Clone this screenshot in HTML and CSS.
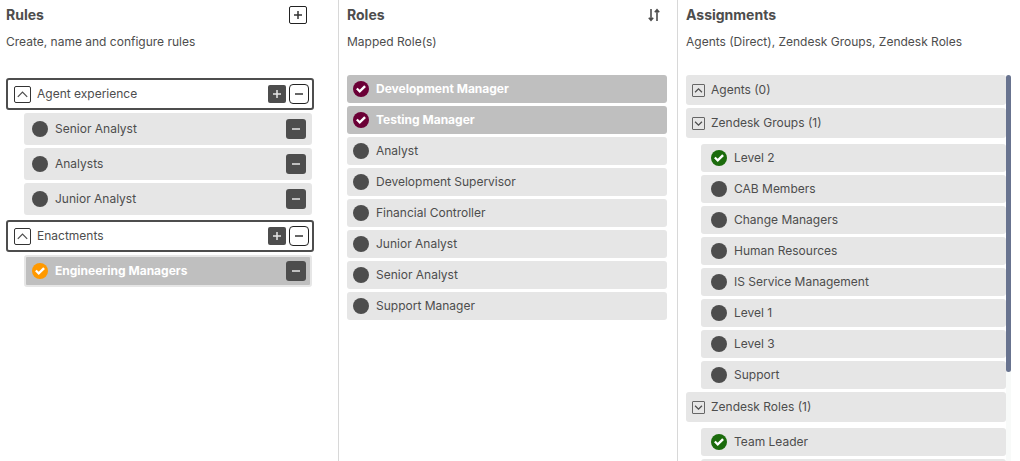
FILE: index.html
```html
<!DOCTYPE html>
<html lang="en">
<head>
    <meta charset="UTF-8">
    <meta name="viewport" content="width=device-width, initial-scale=1.0">
    <title>Rules</title>
    <link rel="stylesheet" href="styles.css">
</head>
<body>
    <svg width="0" height="0" class="sprite" aria-hidden="true">
        <symbol id="plus" viewBox="0 0 16 16"><path d="M8 4v8M4 8h8"/></symbol>
        <symbol id="minus" viewBox="0 0 16 16"><path d="M4 8h8"/></symbol>
        <symbol id="up" viewBox="0 0 16 16"><path d="M3 10.5l5-5 5 5"/></symbol>
        <symbol id="down" viewBox="0 0 16 16"><path d="M3 5.5l5 5 5-5"/></symbol>
    </svg>

    <main class="columns">
        <section class="column rules">
            <header class="column-header">
                <h2>Rules</h2>
                <button class="btn outline" aria-label="Add group"><svg><use href="#plus"/></svg></button>
            </header>
            <p class="description">Create, name and configure rules</p>

            <div class="rule-list">
                <div class="rule-group">
                    <button class="toggle" aria-label="Collapse"><svg><use href="#up"/></svg></button>
                    <span class="name">Agent experience</span>
                    <button class="btn" aria-label="Add rule"><svg><use href="#plus"/></svg></button>
                    <button class="btn outline large" aria-label="Remove group"><svg><use href="#minus"/></svg></button>
                </div>
                <div class="rule">
                    <label><input type="checkbox">Senior Analyst</label>
                    <button class="btn large" aria-label="Remove rule"><svg><use href="#minus"/></svg></button>
                </div>
                <div class="rule">
                    <label><input type="checkbox">Analysts</label>
                    <button class="btn large" aria-label="Remove rule"><svg><use href="#minus"/></svg></button>
                </div>
                <div class="rule">
                    <label><input type="checkbox">Junior Analyst</label>
                    <button class="btn large" aria-label="Remove rule"><svg><use href="#minus"/></svg></button>
                </div>

                <div class="rule-group">
                    <button class="toggle" aria-label="Collapse"><svg><use href="#up"/></svg></button>
                    <span class="name">Enactments</span>
                    <button class="btn" aria-label="Add rule"><svg><use href="#plus"/></svg></button>
                    <button class="btn outline large" aria-label="Remove group"><svg><use href="#minus"/></svg></button>
                </div>
                <div class="rule selected">
                    <label><input type="checkbox" checked>Engineering Managers</label>
                    <button class="btn large" aria-label="Remove rule"><svg><use href="#minus"/></svg></button>
                </div>
            </div>
        </section>

        <section class="column roles">
            <header class="column-header">
                <h2>Roles</h2>
                <button class="sort" aria-label="Sort">
                    <svg viewBox="0 0 12 14"><path d="M3 1v11M.8 9.800L3 12.200l2.200-2.400M9 13V2M6.800 4.200L9 1.800l2.200 2.400"/></svg>
                </button>
            </header>
            <p class="description">Mapped Role(s)</p>

            <div class="list">
                <label class="item selected"><input type="checkbox" checked>Development Manager</label>
                <label class="item selected"><input type="checkbox" checked>Testing Manager</label>
                <label class="item"><input type="checkbox">Analyst</label>
                <label class="item"><input type="checkbox">Development Supervisor</label>
                <label class="item"><input type="checkbox">Financial Controller</label>
                <label class="item"><input type="checkbox">Junior Analyst</label>
                <label class="item"><input type="checkbox">Senior Analyst</label>
                <label class="item"><input type="checkbox">Support Manager</label>
            </div>
        </section>

        <section class="column assignments">
            <header class="column-header">
                <h2>Assignments</h2>
            </header>
            <p class="description">Agents (Direct), Zendesk Groups, Zendesk Roles</p>

            <div class="scroller">
                <div class="list">
                    <button class="group"><svg><use href="#up"/></svg>Agents (0)</button>
                    <button class="group"><svg><use href="#down"/></svg>Zendesk Groups (1)</button>
                    <div class="list sublist">
                        <label class="item"><input type="checkbox" checked>Level 2</label>
                        <label class="item"><input type="checkbox">CAB Members</label>
                        <label class="item"><input type="checkbox">Change Managers</label>
                        <label class="item"><input type="checkbox">Human Resources</label>
                        <label class="item"><input type="checkbox">IS Service Management</label>
                        <label class="item"><input type="checkbox">Level 1</label>
                        <label class="item"><input type="checkbox">Level 3</label>
                        <label class="item"><input type="checkbox">Support</label>
                    </div>
                    <button class="group"><svg><use href="#down"/></svg>Zendesk Roles (1)</button>
                    <div class="list sublist">
                        <label class="item"><input type="checkbox" checked>Team Leader</label>
                        <label class="item"><input type="checkbox" aria-label="Role"></label>
                    </div>
                </div>
                <div class="scrollbar"><div class="thumb"></div></div>
            </div>
        </section>
    </main>
</body>
</html>
```
FILE: styles.css
```css
* {
    box-sizing: border-box;
}

body {
    margin: 0;
    padding-right: 3px;
    height: 100vh;
    overflow: hidden;
    font-family: Inter, sans-serif;
    font-size: 12px;
    line-height: 16px;
    color: #4d4d4d;
    background-color: #fff;
}

button {
    border: none;
    padding: 0;
    font: inherit;
    color: inherit;
    background: none;
    cursor: pointer;
}

svg {
    display: block;
    fill: none;
    stroke: currentColor;
}

.sprite {
    position: absolute;
}

.columns {
    display: grid;
    grid-template-columns: repeat(3, 1fr);
    height: 100%;
}

.column {
    display: flex;
    flex-direction: column;
    min-height: 0;
    padding: 6px 10px 0 8px;
    border-right: 1px solid #d8d8d8;
}

.rules {
    padding-left: 6px;
    padding-right: 24px;
}

.assignments {
    padding-right: 6px;
    border-right: none;
}

.column-header {
    display: flex;
    align-items: center;
    justify-content: space-between;
    height: 18px;
}

.rules .column-header {
    padding-right: 7px;
}

h2 {
    margin: 0;
    font-size: 14px;
    font-weight: 700;
}

.description {
    margin: 10px 0 25px;
}

/* buttons */
.btn {
    display: flex;
    align-items: center;
    justify-content: center;
    flex: none;
    width: 18px;
    height: 18px;
    border-radius: 2px;
    background-color: #4d4d4d;
    color: #e6e6e6;
}

.btn svg {
    width: 16px;
    height: 16px;
    stroke-width: 1.5;
}

.large {
    width: 20px;
    height: 20px;
    border-radius: 3px;
}

.outline {
    border: 1px solid #222;
    background-color: #fff;
    color: #333;
}

.outline.large {
    border-radius: 4px;
}

.toggle {
    flex: none;
    width: 17px;
    height: 17px;
    border: 1px solid #333;
    border-radius: 2px;
}

.toggle svg {
    width: 15px;
    height: 15px;
    stroke-width: 1.3;
}

.sort {
    margin-right: 7px;
}

.sort svg {
    width: 12px;
    height: 14px;
    stroke-width: 1.6;
}

/* round check marks */
input {
    appearance: none;
    flex: none;
    width: 16px;
    height: 16px;
    margin: 0;
    border-radius: 50%;
    background-color: #4d4d4d;
}

input:checked::before {
    content: "";
    display: block;
    width: 16px;
    height: 16px;
    background-color: #fff;
    clip-path: polygon(19% 52%, 29% 42%, 42% 55%, 70% 27%, 81% 37%, 42% 75%);
}

.rules input:checked {
    background-color: #ff9900;
}

.roles input:checked {
    background-color: #6b0036;
}

.assignments input:checked {
    background-color: #1b6b0c;
}

/* rules */
.rule-list {
    display: flex;
    flex-direction: column;
    gap: 3px;
    padding-top: 3px;
}

.rule-group {
    display: flex;
    align-items: center;
    gap: 3px;
    height: 32px;
    padding: 0 3px 0 6px;
    border: 2px solid #4d4d4d;
    border-radius: 3px;
}

.rule + .rule-group {
    margin-top: 2px;
}

.name {
    flex: 1;
    padding-left: 3px;
}

.rule {
    display: flex;
    align-items: center;
    height: 32px;
    margin: 0 2px 0 18px;
    padding: 0 4px 0 6px;
    border: 2px solid #e6e6e6;
    border-radius: 3px;
    background-color: #e6e6e6;
}

.rule label {
    display: flex;
    align-items: center;
    gap: 7px;
    flex: 1;
}

.selected {
    background-color: #bfbfbf;
    color: #fff;
    font-weight: 700;
}

/* roles and assignments */
.list {
    display: flex;
    flex-direction: column;
    gap: 3px;
}

.item {
    display: flex;
    align-items: center;
    flex: none;
    gap: 7px;
    height: 28px;
    padding-left: 6px;
    border-radius: 3px;
    background-color: #e6e6e6;
}

.item.selected {
    background-color: #bfbfbf;
}

.group {
    display: flex;
    align-items: center;
    flex: none;
    gap: 6px;
    height: 30px;
    padding-left: 6px;
    border-radius: 3px;
    background-color: #e6e6e6;
}

.group svg {
    width: 13px;
    height: 13px;
    border: 1px solid #666;
    border-radius: 1px;
    stroke-width: 1.8;
}

.sublist {
    margin-left: 15px;
    padding-top: 3px;
}

.sublist .item {
    padding-left: 10px;
}

.scroller {
    display: flex;
    flex: 1;
    min-height: 0;
    overflow: hidden;
}

.scroller > .list {
    flex: 1;
}

.scrollbar {
    flex: none;
    width: 5px;
    background-color: #f8faf9;
}

.thumb {
    height: 77%;
    border-radius: 3px;
    background-color: #68738f;
}
```
